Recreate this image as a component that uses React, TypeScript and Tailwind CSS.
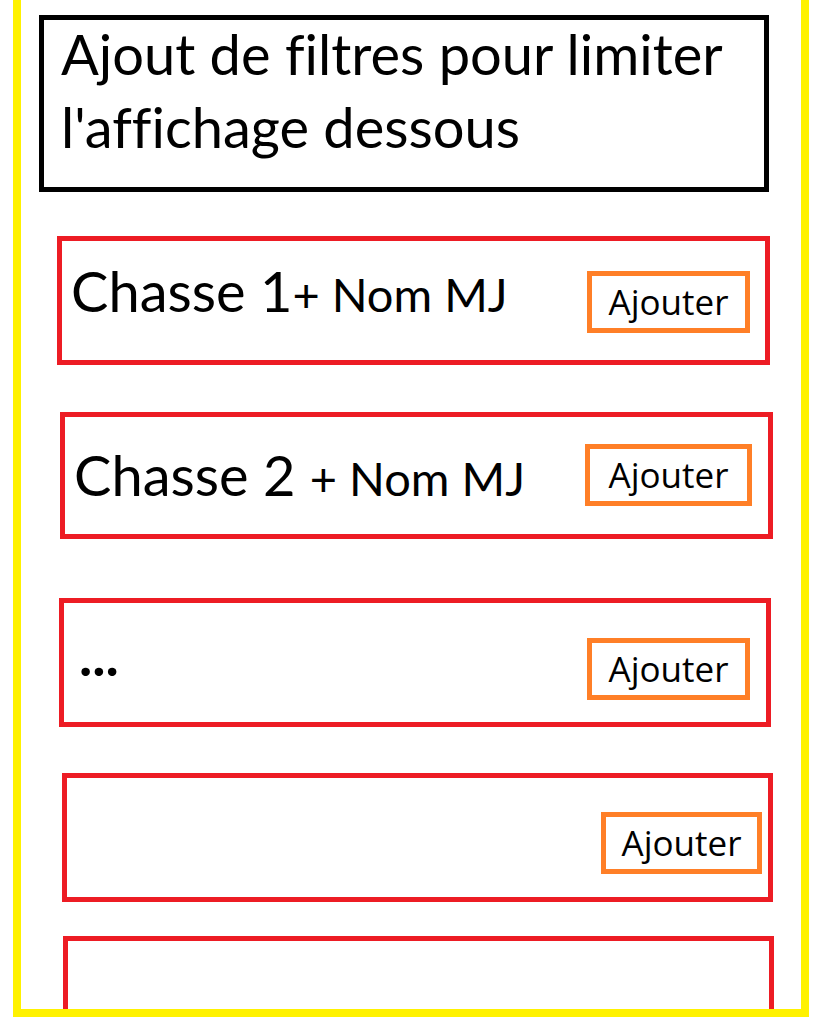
const rows = [
  {
    box: 'ml-[36px] mt-[44px] w-[713px] h-[129px]',
    text: 'pl-[9px] pt-[22px]',
    label: (
      <>
        Chasse 1<span className="text-[47px]">+ Nom MJ</span>
      </>
    ),
    button: 'mt-[30px] mr-[15px] w-[163px]',
  },
  {
    box: 'ml-[39px] mt-[47px] w-[713px] h-[127px]',
    text: 'pl-[9px] pt-[30px]',
    label: (
      <>
        Chasse 2 <span className="text-[47px]">+ Nom MJ</span>
      </>
    ),
    button: 'mt-[27px] mr-[16px] w-[167px]',
  },
  {
    box: 'ml-[38px] mt-[59px] w-[712px] h-[129px]',
    text: 'pl-[15px] pt-[24px] font-bold',
    label: <>...</>,
    button: 'mt-[35px] mr-[16px] w-[163px]',
  },
  {
    box: 'ml-[41px] mt-[46px] w-[711px] h-[129px]',
    text: '',
    label: null,
    button: 'mt-[34px] mr-[6px] w-[161px]',
  },
];

const AddButton = ({ className }: { className: string }) => (
  <button
    className={`${className} ml-auto h-[62px] shrink-0 border-[5px] border-[#ff7f27] bg-white pb-[2px] font-['Open_Sans',sans-serif] text-[35px] leading-none text-black`}
  >
    Ajouter
  </button>
);

export default function App() {
  return (
    <div className="h-[1036px] w-[832px] bg-white">
      <div className="ml-[13px] flex h-[1017px] w-[796px] flex-col overflow-hidden border-[8px] border-t-0 border-[#fff200] font-['Lato',sans-serif] text-black [font-variant-ligatures:none]">
        {/* Filtres */}
        <div className="ml-[18px] mt-[15px] h-[177px] w-[730px] shrink-0 border-[5px] border-black pl-[17px]">
          <p className="-mt-[3px] text-[56px] leading-[73px]">
            Ajout de filtres pour limiter
            <br />
            l'affichage dessous
          </p>
        </div>

        {/* Liste des chasses */}
        {rows.map((row, i) => (
          <div
            key={i}
            className={`${row.box} flex shrink-0 items-start border-[5px] border-[#ed1c24]`}
          >
            {row.label && (
              <div className={`${row.text} text-[56px] leading-none whitespace-nowrap`}>
                {row.label}
              </div>
            )}
            <AddButton className={row.button} />
          </div>
        ))}

        <div className="ml-[42px] mt-[34px] h-[129px] w-[711px] shrink-0 border-[5px] border-[#ed1c24]" />
      </div>
    </div>
  );
}
